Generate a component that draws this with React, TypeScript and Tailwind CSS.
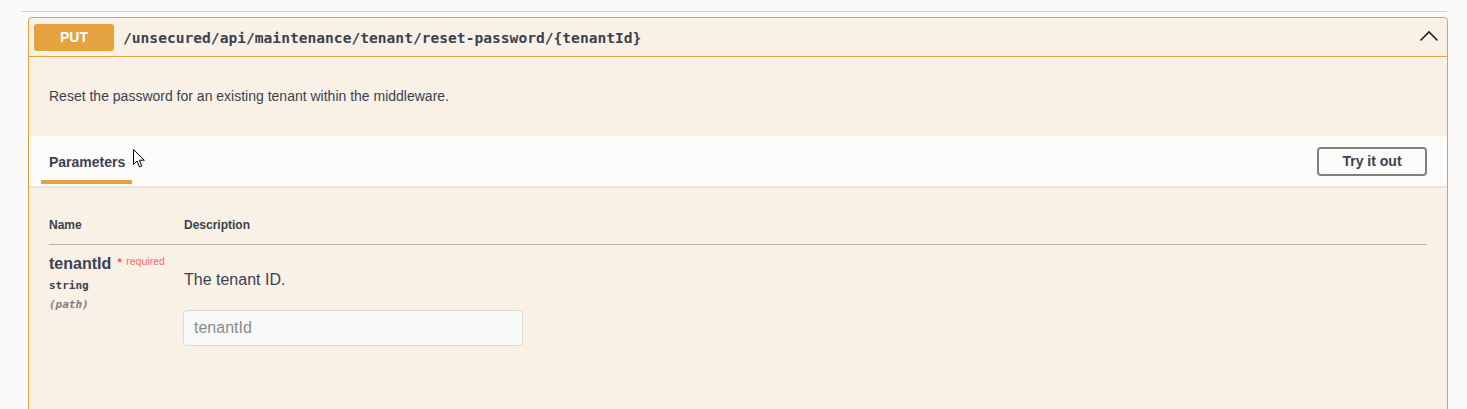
import React from 'react'

const sans = "font-['Liberation_Sans',Arial,sans-serif]"
const mono = "font-['DejaVu_Sans_Mono','Liberation_Mono',monospace]"

function ChevronUp() {
  return (
    <svg width="20" height="20" viewBox="0 0 20 20" className="text-[#222]">
      <path d="M1.5 13.5 L10 5 L18.5 13.5" fill="none" stroke="currentColor" strokeWidth="1.6" />
    </svg>
  )
}

function Cursor() {
  return (
    <svg
      width="13"
      height="20"
      viewBox="0 0 13 20"
      className="absolute left-[133px] top-[149px] pointer-events-none"
    >
      <path
        d="M0.5 0.5 L0.5 15.5 L4 12 L6.5 18 L8.8 17 L6.4 11.2 L11.3 11.2 Z"
        fill="#fff"
        stroke="#000"
        strokeWidth="1"
        strokeLinejoin="miter"
      />
    </svg>
  )
}

function ParameterRow() {
  return (
    <div className="flex">
      <div className="w-[135px] shrink-0 pt-[9px]">
        <div className="flex items-start">
          <span className={`${sans} text-[16px] font-bold text-[#3b4151] leading-[20px]`}>
            tenantId
          </span>
          <span className={`${sans} text-[13px] text-[#ff2a2a] ml-[6px] leading-[16px] pt-[1px]`}>*</span>
          <span className={`${sans} text-[10.5px] text-[rgba(255,0,0,0.6)] ml-[4px] leading-[12px] pt-[1px]`}>
            required
          </span>
        </div>
        <div className={`${mono} text-[11px] font-semibold text-[#3b4151] mt-[4px] leading-[16px]`}>string</div>
        <div className={`${mono} text-[11px] font-semibold italic text-[#808080] mt-[3px] leading-[16px]`}>
          (path)
        </div>
      </div>
      <div className="flex-1 pt-[25px]">
        <div className={`${sans} text-[16px] text-[#3b4151] leading-[20px]`}>The tenant ID.</div>
        <input
          placeholder="tenantId"
          className={`${sans} -ml-px mt-[20px] w-[340px] h-[36px] rounded-[4px] border border-[#d9d9d9] bg-[#f9f9f9] px-[10px] text-[16px] text-[#3b4151] placeholder:text-[#8a8a8a] outline-none`}
        />
      </div>
    </div>
  )
}

export default function App() {
  return (
    <div className="relative min-h-[409px] w-[1467px] overflow-hidden bg-[#fafafa]">
      <div className="pl-[21px] pr-[20px] pt-[11px]">
        <div className="h-px bg-[#d3d3d3]" />
      </div>
      <div className="ml-[28px] mr-[19px] mt-[5px] rounded-[4px] border border-[#e5a23e] bg-[#f9f1e6] h-[420px]">
        <div className="flex h-[39px] items-center border-b border-[#e5a23e] px-[5px]">
          <div
            className={`${sans} flex h-[27px] w-[80px] items-center justify-center rounded-[3px] bg-[#e4a33f] text-[14px] font-bold text-white`}
          >
            PUT
          </div>
          <div className={`${mono} ml-[9px] mt-[1px] text-[14.6px] font-bold text-[#3b4151]`}>
            /unsecured/api/maintenance/tenant/reset-password/{'{tenantId}'}
          </div>
          <div className="ml-auto mr-[3px] flex">
            <ChevronUp />
          </div>
        </div>
        <div className={`${sans} flex h-[79px] items-center px-[20px] pb-[1px] text-[14px] text-[#3b4151]`}>
          Reset the password for an existing tenant within the middleware.
        </div>
        <div className="flex h-[50px] items-center bg-[#fdfcfa] pl-[12px] pr-[20px] shadow-[0_1px_2px_rgba(0,0,0,0.1)]">
          <div className="flex h-full flex-col justify-end">
            <div className={`${sans} px-[8px] pb-[7px] text-[14px] font-bold text-[#3b4151]`}>Parameters</div>
            <div className="mb-[2px] h-[4px] w-[91px] bg-[#e4a23f]" />
          </div>
          <button
            className={`${sans} ml-auto h-[29px] w-[110px] rounded-[4px] border-2 border-[#808080] bg-transparent text-[14px] font-bold text-[#3b4151]`}
          >
            Try it out
          </button>
        </div>
        <div className="px-[20px] pt-[30px]">
          <div className="flex border-b border-[#b3b3b3] pb-[10px]">
            <div className={`${sans} w-[135px] text-[12px] font-bold text-[#3b4151]`}>Name</div>
            <div className={`${sans} text-[12px] font-bold text-[#3b4151]`}>Description</div>
          </div>
          <ParameterRow />
        </div>
      </div>
      <Cursor />
    </div>
  )
}
